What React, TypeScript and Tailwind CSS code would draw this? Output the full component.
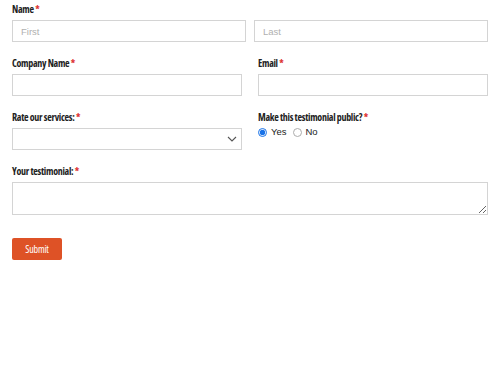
import React from "react";

const Label = ({ text }: { text: string }) => (
  <div className="h-[16px] text-[10px] leading-[16px] font-bold tracking-[-0.3px] text-[#222] [font-family:'Open_Sans','Liberation_Sans_Narrow',sans-serif] font-stretch-condensed">
    {text} <span className="text-[#d33]">*</span>
  </div>
);

const inputCls =
  "block w-full h-[22px] border border-[#d4d4d4] bg-white px-[8px] text-[9.5px] [font-family:'Liberation_Sans',Arial,sans-serif] text-[#333] placeholder:text-[#b0b0b0] outline-none";

const App = () => {
  return (
    <div className="w-[500px] h-[375px] bg-white pl-[12px] pr-[12px] pt-[1px]">
      <div className="flex flex-col gap-[13px] w-[476px]">
        <div>
          <Label text="Name" />
          <div className="flex gap-[8px] mt-[3px]">
            <input className={inputCls + " w-[234px]"} placeholder="First" />
            <input className={inputCls + " w-[234px]"} placeholder="Last" />
          </div>
        </div>

        <div className="flex gap-[16px]">
          <div className="w-[230px]">
            <Label text="Company Name" />
            <input className={inputCls + " mt-[3px]"} />
          </div>
          <div className="w-[230px]">
            <Label text="Email" />
            <input className={inputCls + " mt-[3px]"} />
          </div>
        </div>

        <div className="flex gap-[16px]">
          <div className="w-[230px]">
            <Label text="Rate our services:" />
            <div className="relative mt-[3px]">
              <select className={inputCls + " appearance-none"} defaultValue="">
                <option value=""></option>
              </select>
              <svg className="absolute right-[5px] top-[8px]" width="10" height="6" viewBox="0 0 10 6">
                <path d="M1 1 L5 5 L9 1" fill="none" stroke="#555" strokeWidth="1.1" />
              </svg>
            </div>
          </div>
          <div className="w-[230px] h-[41px]">
            <Label text="Make this testimonial public?" />
            <div className="flex items-center gap-[4px] h-[14px] text-[9.5px] [font-family:'Liberation_Sans',Arial,sans-serif] text-[#222]">
              <label className="flex items-center gap-[4px]">
                <input type="radio" name="pub" defaultChecked className="m-0 w-[9px] h-[9px] accent-[#1a73e8]" />
                Yes
              </label>
              <label className="flex items-center gap-[4px] ml-[2px]">
                <input type="radio" name="pub" className="m-0 w-[9px] h-[9px] accent-[#bbb] opacity-60" />
                No
              </label>
            </div>
          </div>
        </div>

        <div>
          <Label text="Your testimonial:" />
          <textarea className={inputCls + " h-[33px] mt-[3px] resize-y py-[4px]"} />
        </div>
      </div>

      <button className="mt-[23px] w-[50px] h-[22px] rounded-[2px] bg-[#de5226] text-white text-[10px] tracking-[-0.2px] [font-family:'Open_Sans','Liberation_Sans_Narrow',sans-serif] font-stretch-condensed">
        Submit
      </button>
    </div>
  );
};

export default App;
